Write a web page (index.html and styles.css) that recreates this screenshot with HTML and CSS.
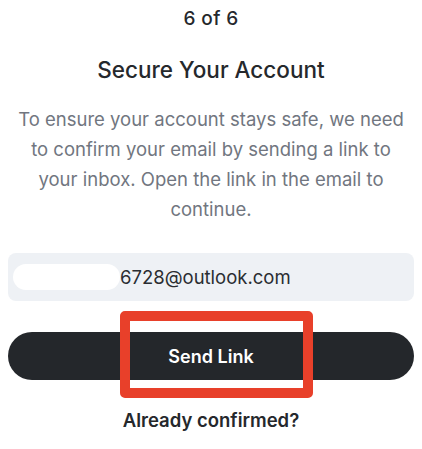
FILE: index.html
```html
<!DOCTYPE html>
<html lang="en">
<head>
    <meta charset="UTF-8">
    <meta name="viewport" content="width=device-width, initial-scale=1.0">
    <title>Secure Your Account</title>
    <link rel="stylesheet" href="styles.css">
</head>
<body>
    <div class="container">
        <div class="step">6 of 6</div>
        <h1>Secure Your Account</h1>
        <p class="intro">To ensure your account stays safe, we need to confirm your email by sending a link to your inbox. Open the link in the email to continue.</p>

        <div class="email-box">
            <span class="redacted"></span>
            <span class="email">6728@outlook.com</span>
        </div>

        <div class="button-wrap">
            <button class="send-btn">Send Link</button>
            <div class="highlight"></div>
        </div>

        <a class="confirmed" href="#">Already confirmed?</a>
    </div>
</body>
</html>
```

FILE: styles.css
```css
body {
    margin: 0;
    background: white;
    font-family: Inter, "Noto Sans", sans-serif;
    color: #25282c;
}
.container {
    padding: 0 8px;
    display: flex;
    flex-direction: column;
    align-items: stretch;
    text-align: center;
}
.step {
    margin-top: 7px;
    font-size: 19px;
    font-weight: 500;
    line-height: 24px;
    letter-spacing: 0.4px;
}
h1 {
    margin: 25px 0 0;
    font-size: 22.5px;
    font-weight: 500;
    line-height: 28px;
}
.intro {
    margin: 20px 8px 0;
    font-size: 18.5px;
    line-height: 30px;
    color: #717680;
}
.email-box {
    margin-top: 29px;
    height: 48px;
    border-radius: 8px;
    background: #eef1f5;
    display: flex;
    align-items: center;
    padding-left: 5px;
    font-size: 18.5px;
}
.redacted {
    width: 107px;
    height: 26px;
    border-radius: 13px;
    background: white;
}
.email {
    color: #2a2d31;
}
.button-wrap {
    position: relative;
    margin-top: 31px;
}
.send-btn {
    width: 100%;
    height: 48px;
    border: none;
    border-radius: 24px;
    background: #24272b;
    color: white;
    font-family: inherit;
    font-size: 18px;
    font-weight: 600;
    cursor: pointer;
}
.highlight {
    position: absolute;
    left: 112px;
    top: -21px;
    width: 173px;
    height: 67px;
    border: 10px solid #e8402a;
    border-radius: 5px;
}
.confirmed {
    margin-top: 29px;
    font-size: 18.5px;
    line-height: 22px;
    font-weight: 600;
    color: #25282c;
    text-decoration: none;
}
```
